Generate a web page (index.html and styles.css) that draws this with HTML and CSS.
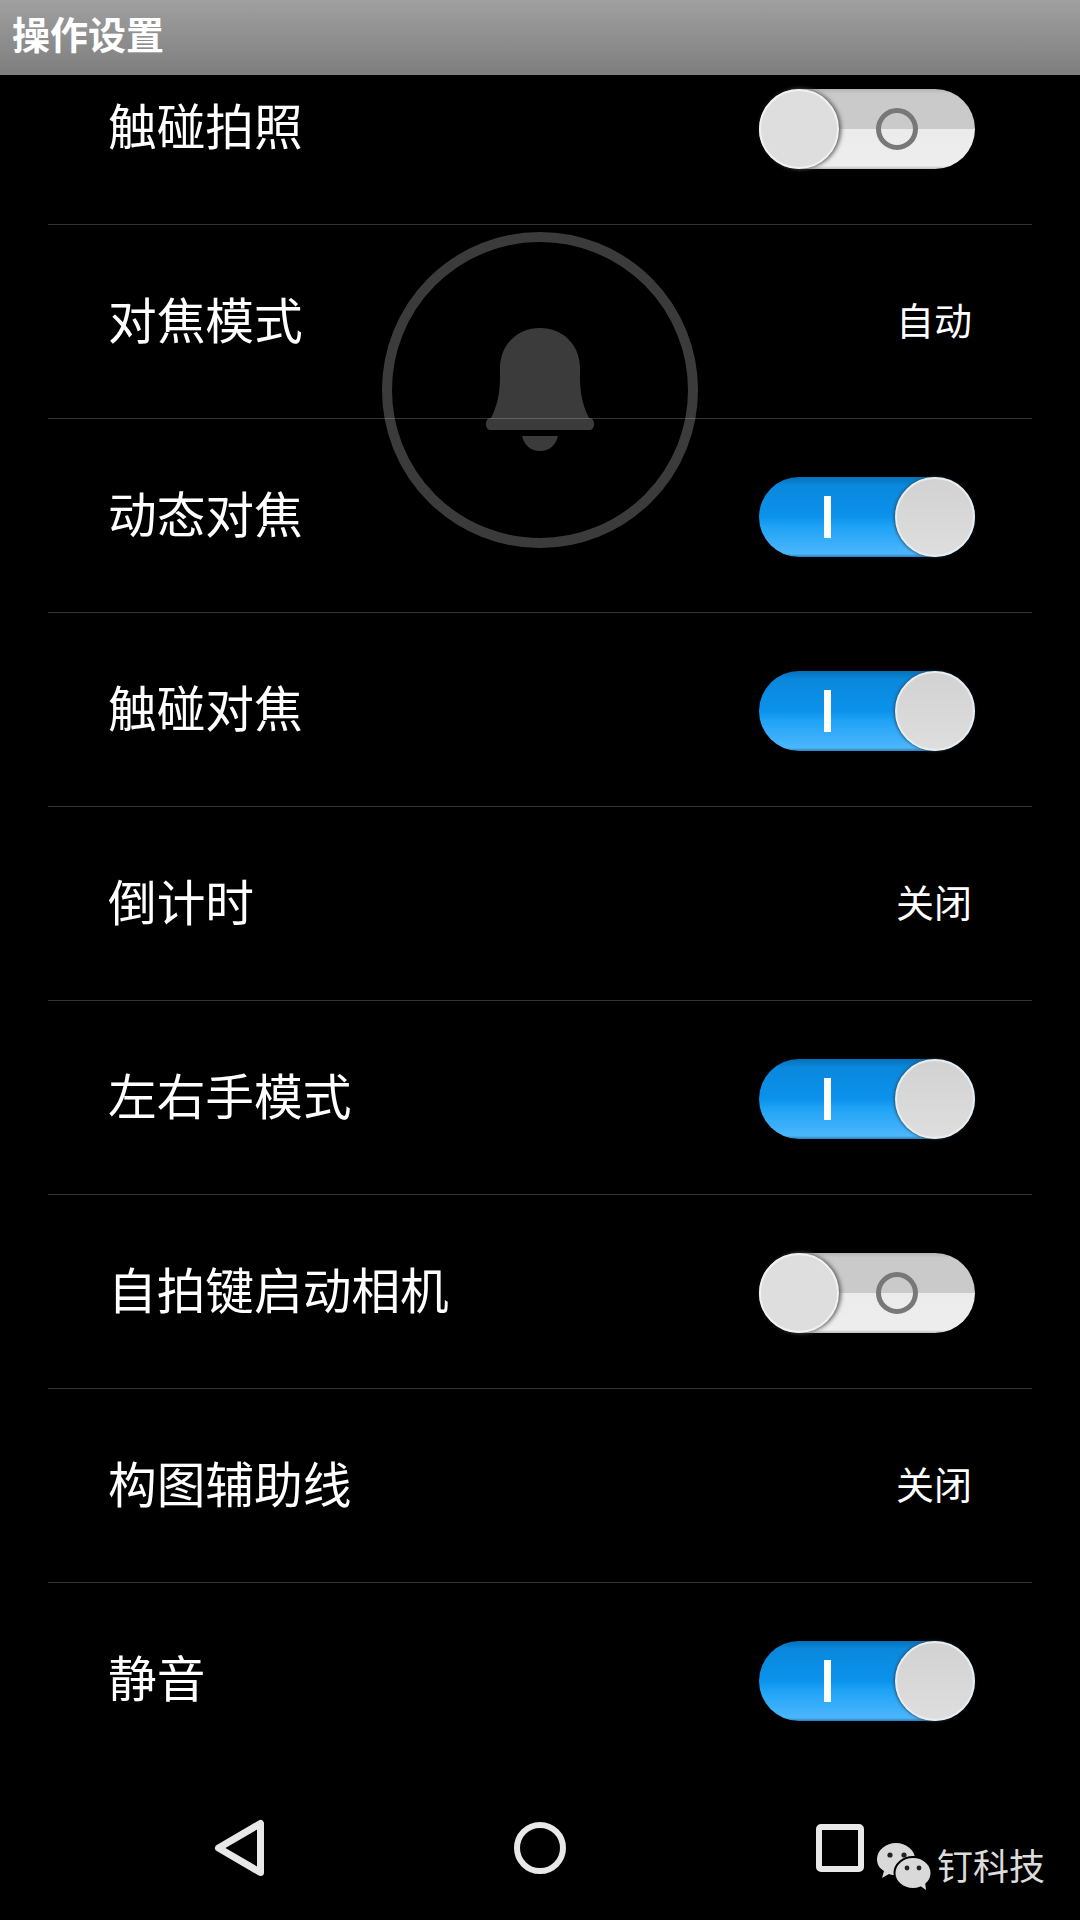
FILE: index.html
```html
<!DOCTYPE html>
<html lang="zh">
<head>
  <meta charset="UTF-8">
  <title>操作设置</title>
  <link rel="stylesheet" href="styles.css">
</head>
<body>
  <header class="title-bar">操作设置</header>

  <main class="list-area">
    <ul class="settings">
      <li class="row"><span class="label">触碰拍照</span><div class="toggle off"><i class="knob"></i><i class="ring"></i></div></li>
      <li class="row"><span class="label">对焦模式</span><span class="value">自动</span></li>
      <li class="row"><span class="label">动态对焦</span><div class="toggle on"><i class="bar"></i><i class="knob"></i></div></li>
      <li class="row"><span class="label">触碰对焦</span><div class="toggle on"><i class="bar"></i><i class="knob"></i></div></li>
      <li class="row"><span class="label">倒计时</span><span class="value">关闭</span></li>
      <li class="row"><span class="label">左右手模式</span><div class="toggle on"><i class="bar"></i><i class="knob"></i></div></li>
      <li class="row"><span class="label">自拍键启动相机</span><div class="toggle off"><i class="knob"></i><i class="ring"></i></div></li>
      <li class="row"><span class="label">构图辅助线</span><span class="value">关闭</span></li>
      <li class="row"><span class="label">静音</span><div class="toggle on"><i class="bar"></i><i class="knob"></i></div></li>
    </ul>
  </main>

  <nav class="nav-bar">
    <div class="nav-item">
      <svg width="56" height="64" viewBox="0 0 56 64"><path d="M6.500 32 L48.500 7.500 L48.500 56.500 Z" fill="none" stroke="#e8e8e8" stroke-width="7" stroke-linejoin="round"/></svg>
    </div>
    <div class="nav-item"><div class="home"></div></div>
    <div class="nav-item"><div class="recent"></div></div>
  </nav>

  <!-- silent mode popup, sits over the list -->
  <div class="silent-popup">
    <svg width="320" height="320" viewBox="0 0 320 320">
      <circle cx="160" cy="160" r="153" fill="none" stroke="#fff" stroke-width="10"/>
      <path fill="#fff" d="M120 138 C120 115 137 98 160 98 C183 98 200 115 200 138 L200 146 C200 165 203 175 208 186 L209 188 C212 188 214 190 214 194 C214 198 212 200 209 200 L111 200 C108 200 106 198 106 194 C106 190 108 188 111 188 L112 186 C117 175 120 165 120 146 Z"/>
      <path fill="#fff" d="M142 206 L178 206 C176 215 169 221 160 221 C151 221 144 215 142 206 Z"/>
    </svg>
  </div>

  <!-- watermark -->
  <div class="watermark">
    <svg width="56" height="50" viewBox="0 0 56 50">
      <path fill="#d9d9d9" d="M20 2 C30 2 39 9 39 18 C39 27 30 34 20 34 C17 34 15 34 13 33 L6 37 L8 30 C3 27 1 23 1 18 C1 9 10 2 20 2 Z"/>
      <ellipse cx="37" cy="32" rx="18.500" ry="16" fill="#d9d9d9" stroke="#000" stroke-width="2"/>
      <path fill="#d9d9d9" d="M43 44 L50 49 L49 41 Z"/>
      <circle cx="14" cy="14" r="2.600" fill="#222"/>
      <circle cx="28" cy="14" r="2.600" fill="#222"/>
      <circle cx="31" cy="27" r="2.400" fill="#222"/>
      <circle cx="43" cy="27" r="2.400" fill="#222"/>
    </svg>
    <span class="watermark-text">钉科技</span>
  </div>
</body>
</html>
```

FILE: styles.css
```css
* {
  box-sizing: border-box;
}
html, body {
  margin: 0;
  padding: 0;
}
body {
  width: 1080px;
  height: 1920px;
  position: relative;
  overflow: hidden;
  background: #000;
  color: #fff;
  font-family: "Noto Sans CJK SC", "Noto Sans", sans-serif;
  display: flex;
  flex-direction: column;
}

.title-bar {
  height: 75px;
  flex: none;
  padding-left: 12px;
  background: linear-gradient(#a0a0a0, #7e7e7e);
  font-size: 38px;
  font-weight: 700;
  line-height: 66px;
}

.list-area {
  height: 1701px;
  flex: none;
  overflow: hidden;
}
.settings {
  list-style: none;
  margin: -44px 0 0;
  padding: 0;
}
.row {
  height: 194px;
  margin: 0 48px;
  padding: 0 57px 0 60px;
  display: flex;
  align-items: center;
  justify-content: space-between;
  border-bottom: 1px solid #343434;
  font-size: 48.700px;
}
.row:last-child {
  border-bottom: none;
}
.label {
  padding-bottom: 8px;
}
.value {
  font-size: 38px;
  margin-right: 3px;
  padding-bottom: 6px;
}

.toggle {
  width: 216px;
  height: 80px;
  margin-top: 2px;
  border-radius: 40px;
  display: flex;
  align-items: center;
  filter: blur(0.7px);
}
.toggle i {
  display: block;
  flex: none;
}
.toggle.off {
  background: linear-gradient(#b4b4b4, #cacaca 6%, #cacaca 50%, #ebebeb 50%, #eeeeee 96%, #bcbcbc);
}
.toggle.on {
  background: linear-gradient(#0670b8, #0a88dc 10%, #0b92ec 50%, #1fa3f6 62%, #4cb6fc 96%, #2a7fb8);
}
.knob {
  width: 80px;
  height: 80px;
  border-radius: 50%;
}
.off .knob {
  background: #dedede;
  border: 2px solid #f2f2f2;
  box-shadow: 2px 0 4px #5c5c5c;
}
.on .knob {
  margin-left: auto;
  background: linear-gradient(#d2d2d2, #dedede);
  border: 2px solid #ececec;
  box-shadow: -1px 0 3px #2c4a60;
}
.ring {
  width: 42px;
  height: 42px;
  margin-left: 37px;
  border-radius: 50%;
  border: 5px solid #787878;
}
.bar {
  width: 7px;
  height: 42px;
  margin-left: 65px;
  background: #fff;
}

.nav-bar {
  flex: 1;
  display: flex;
  justify-content: center;
  align-items: center;
}
.nav-item {
  width: 300px;
  display: flex;
  justify-content: center;
}
.home {
  width: 52px;
  height: 52px;
  border-radius: 50%;
  border: 6px solid #e8e8e8;
}
.recent {
  width: 48px;
  height: 48px;
  border-radius: 5px;
  border: 6px solid #e8e8e8;
}

.silent-popup {
  position: absolute;
  left: 380px;
  top: 230px;
  width: 320px;
  height: 320px;
  opacity: 0.23;
}
.silent-popup svg {
  display: block;
}

.watermark {
  position: absolute;
  left: 876px;
  top: 1839px;
  display: flex;
  align-items: center;
  gap: 5px;
  color: #dcdcdc;
  font-size: 36px;
  line-height: 50px;
}
.watermark-text {
  padding-bottom: 3px;
}
```
